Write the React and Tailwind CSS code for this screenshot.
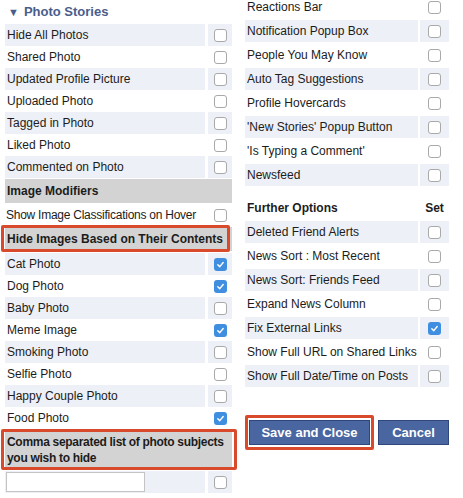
import React from "react";

const leftRows = [
  { label: "Hide All Photos" },
  { label: "Shared Photo" },
  { label: "Updated Profile Picture" },
  { label: "Uploaded Photo" },
  { label: "Tagged in Photo" },
  { label: "Liked Photo" },
  { label: "Commented on Photo" },
];

const contentRows = [
  { label: "Cat Photo", checked: true },
  { label: "Dog Photo", checked: true },
  { label: "Baby Photo" },
  { label: "Meme Image", checked: true },
  { label: "Smoking Photo" },
  { label: "Selfie Photo" },
  { label: "Happy Couple Photo" },
  { label: "Food Photo", checked: true },
];

const rightTop = [
  "Reactions Bar",
  "Notification Popup Box",
  "People You May Know",
  "Auto Tag Suggestions",
  "Profile Hovercards",
  "'New Stories' Popup Button",
  "'Is Typing a Comment'",
  "Newsfeed",
];

const further = [
  { label: "Deleted Friend Alerts" },
  { label: "News Sort : Most Recent" },
  { label: "News Sort: Friends Feed" },
  { label: "Expand News Column" },
  { label: "Fix External Links", checked: true },
  { label: "Show Full URL on Shared Links" },
  { label: "Show Full Date/Time on Posts" },
];

function Box({ checked }) {
  if (checked) {
    return (
      <span className="flex h-[13px] w-[13px] items-center justify-center rounded-[3px] bg-[#3f8ee0]">
        <svg width="9" height="9" viewBox="0 0 10 10">
          <path d="M2 5.2 L4.2 7.4 L8 2.8" fill="none" stroke="white" strokeWidth="1.6" strokeLinecap="round" strokeLinejoin="round" />
        </svg>
      </span>
    );
  }
  return <span className="block h-[13px] w-[13px] rounded-[3px] border border-[#a9a9a9] bg-white" />;
}

function LeftRow({ label, checked, shaded }) {
  const bg = shaded ? "bg-[#edf0f6]" : "bg-white";
  return (
    <div className="flex h-[22px] gap-[3px]">
      <div className={`flex w-[200px] items-center whitespace-nowrap pl-[2px] ${bg}`}>{label}</div>
      <div className={`flex w-[24px] items-center justify-center ${bg}`}>
        <Box checked={checked} />
      </div>
    </div>
  );
}

function RightRow({ label, checked, shaded }) {
  const bg = shaded ? "bg-[#edf0f6]" : "bg-white";
  return (
    <div className="flex h-[24px] gap-[2px] py-[1px]">
      <div className={`flex w-[173px] items-center whitespace-nowrap pl-[2px] ${bg}`}>{label}</div>
      <div className={`flex w-[29px] items-center justify-center ${bg}`}>
        <Box checked={checked} />
      </div>
    </div>
  );
}

export default function App() {
  return (
    <div
      className="flex h-[498px] w-[463px] overflow-hidden bg-white pl-[5px] text-[12px] text-[#1c1c1c]"
      style={{ fontFamily: '"Liberation Sans", Arial, sans-serif' }}
    >
      {/* left column */}
      <div className="w-[227px] shrink-0">
        <div className="flex h-[24px] items-center pl-[3px] text-[13px] font-bold text-[#4a5d8c]">
          <span className="mr-[5px] text-[11px]">▼</span>Photo Stories
        </div>
        {leftRows.map((r, i) => (
          <LeftRow key={r.label} {...r} shaded={i % 2 === 0} />
        ))}
        <div className="mt-[1px] flex h-[24px] items-center bg-[#d3d3d3] pl-[2px] font-bold">Image Modifiers</div>
        <div className="flex h-[24px] gap-[3px]">
          <div className="flex w-[200px] items-center whitespace-nowrap pl-[1px] tracking-[-0.25px]">
            Show Image Classifications on Hover
          </div>
          <div className="flex w-[24px] items-center justify-center">
            <Box />
          </div>
        </div>
        <div className="relative">
          <div className="flex h-[24px] items-center whitespace-nowrap bg-[#d3d3d3] pl-[2px] font-bold">
            Hide Images Based on Their Contents
          </div>
          <div className="absolute -left-[4px] -top-[2px] h-[27px] w-[229px] rounded-[2px] border-[3px] border-[#d94a2c]" />
        </div>
        <div className="h-[2px]" />
        {contentRows.map((r, i) => (
          <LeftRow key={r.label} {...r} shaded={i % 2 === 0} />
        ))}
        <div className="relative mt-[2px]">
          <div className="flex h-[37px] flex-col justify-center whitespace-nowrap bg-[#d3d3d3] pl-[2px] font-bold leading-[16px] tracking-[-0.3px]">
            <span>Comma separated list of photo subjects</span>
            <span>you wish to hide</span>
          </div>
          <div className="absolute -left-[4px] -top-[2px] h-[41px] w-[236px] rounded-[2px] border-[3px] border-[#d94a2c]" />
        </div>
        <div className="mt-[3px] flex h-[22px] gap-[3px]">
          <div className="flex w-[200px] items-center bg-[#edf0f6] pl-[1px]">
            <input type="text" className="h-[20px] w-[139px] border border-[#c4c4c4] bg-white" />
          </div>
          <div className="flex w-[24px] items-center justify-center bg-[#edf0f6]">
            <Box />
          </div>
        </div>
      </div>

      {/* right column */}
      <div className="ml-[13px] -mt-[5px] w-[204px] shrink-0">
        {rightTop.map((l, i) => (
          <RightRow key={l} label={l} shaded={i % 2 === 1} />
        ))}
        <div className="mt-[9px] flex h-[24px] gap-[2px] font-bold">
          <div className="flex w-[173px] items-center pl-[2px]">Further Options</div>
          <div className="flex w-[29px] items-center justify-center">Set</div>
        </div>
        {further.map((r, i) => (
          <RightRow key={r.label} {...r} shaded={i % 2 === 0} />
        ))}
        <div className="mt-[27px] flex items-center">
          <div className="rounded-[2px] border-[3px] border-[#d94a2c] px-[1px] py-[2px]">
            <button className="h-[25px] w-[121px] border border-[#2f477a] bg-[#4a66a0] text-[13px] font-bold text-white">
              Save and Close
            </button>
          </div>
          <button className="ml-[4px] h-[25px] w-[71px] border border-[#2f477a] bg-[#4a66a0] text-[13px] font-bold text-white">
            Cancel
          </button>
        </div>
      </div>
    </div>
  );
}
